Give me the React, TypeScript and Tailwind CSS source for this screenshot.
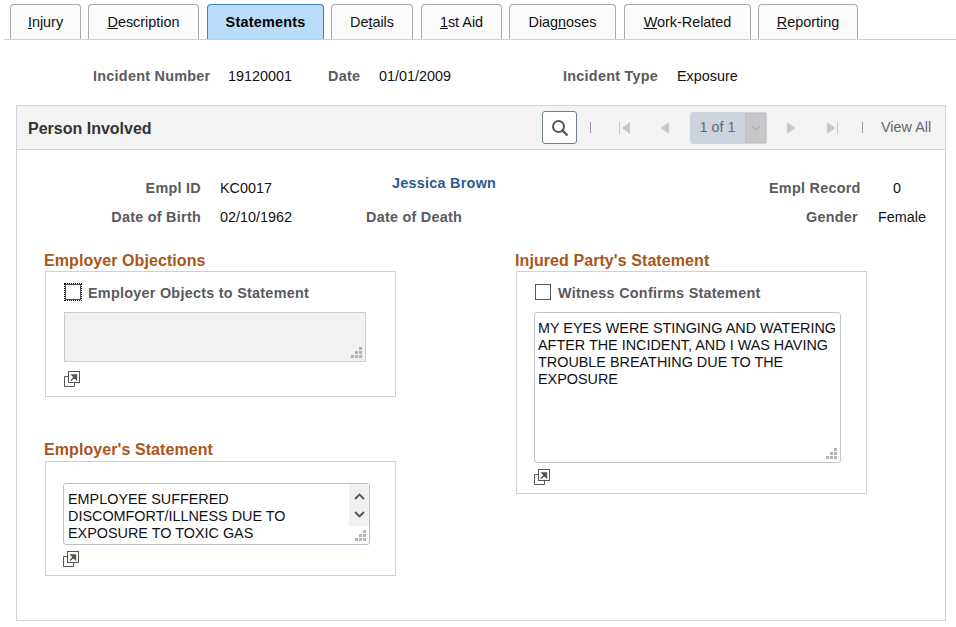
const tabs = [
  { pre: "", u: "I", post: "njury", cls: "ml-[10px] w-[71px]" },
  { pre: "", u: "D", post: "escription", cls: "ml-[7px] w-[111px]" },
  { pre: "Statements", u: "", post: "", cls: "ml-[8px] w-[117px]", active: true },
  { pre: "De", u: "t", post: "ails", cls: "ml-[7px] w-[82px]" },
  { pre: "", u: "1", post: "st Aid", cls: "ml-[8px] w-[81px]" },
  { pre: "Diag", u: "n", post: "oses", cls: "ml-[7px] w-[107px]" },
  { pre: "", u: "W", post: "ork-Related", cls: "ml-[8px] w-[127px]" },
  { pre: "", u: "R", post: "eporting", cls: "ml-[7px] w-[100px]" },
];

function Grip() {
  return (
    <svg width="12" height="12" viewBox="0 0 12 12" className="absolute right-[2px] bottom-[2px]" fill="#b4b4b4">
      <rect x="8" y="0" width="3" height="3" />
      <rect x="4" y="4" width="3" height="3" />
      <rect x="8" y="4" width="3" height="3" />
      <rect x="0" y="8" width="3" height="3" />
      <rect x="4" y="8" width="3" height="3" />
      <rect x="8" y="8" width="3" height="3" />
    </svg>
  );
}

function Expand({ cls }: { cls: string }) {
  return (
    <svg width="16" height="16" viewBox="0 0 16 16" className={cls} fill="none">
      <path d="M4.5 5.5H0.5V15.5H10.5V11.5" stroke="#555" />
      <rect x="4.5" y="0.5" width="11" height="11" fill="#fff" stroke="#555" />
      <path d="M7 9.5L11 5.5M8 4H12.5V8.5Z" stroke="#555" strokeWidth="1.4" fill="#555" />
    </svg>
  );
}

function Pipe({ color, cls }: { color: string; cls: string }) {
  return <span className={`w-px h-[11px] ${color} ${cls}`} />;
}

const label = "font-bold text-[#5a5a60] tracking-[0.26px]";
const heading = "text-[16px] font-bold text-[#a9561a] leading-[18px] tracking-[0.08px]";

export default function App() {
  return (
    <div className="w-[956px] h-[627px] bg-white overflow-hidden text-[14.4px] text-[#111] font-['Liberation_Sans',Arial,sans-serif]">
      <div className="pt-[4px] ml-[4px] flex border-b border-[#cfcfcf] h-[40px]">
        <div className="flex -ml-[4px]">
          {tabs.map((t) => (
            <div
              key={t.pre + t.u}
              className={`${t.cls} h-[35px] rounded-t-[4px] border border-b-0 flex items-center justify-center pt-[1px] ${
                t.active
                  ? "bg-[#b9dcfb] border-[#3f7fc0] font-bold text-black tracking-[0.22px]"
                  : "bg-[#fbfbfb] border-[#a9a9a9]"
              }`}
            >
              <span>
                {t.pre}
                {t.u && <span className="underline">{t.u}</span>}
                {t.post}
              </span>
            </div>
          ))}
        </div>
      </div>

      <div className="h-[65px] flex items-center pt-[9px]">
        <span className={`ml-[93px] w-[117px] whitespace-nowrap ${label}`}>Incident Number</span>
        <span className="ml-[18px] w-[64px]">19120001</span>
        <span className={`ml-[36px] w-[33px] ${label}`}>Date</span>
        <span className="ml-[18px] w-[72px]">01/01/2009</span>
        <span className={`ml-[112px] w-[95px] whitespace-nowrap ${label}`}>Incident Type</span>
        <span className="ml-[19px]">Exposure</span>
      </div>

      <div className="ml-[16px] w-[930px] h-[516px] border border-[#d0d3d9]">
        <div className="h-[44px] bg-[#f3f3f3] border-b border-[#d0d3d9] flex items-center">
          <span className="ml-[11px] w-[514px] pt-[2px] text-[16px] font-bold text-[#333]">Person Involved</span>
          <div className="w-[35px] h-[33px] bg-white border border-[#6f8183] rounded-[3px] flex items-center justify-center">
            <svg width="18" height="18" viewBox="0 0 18 18" fill="none" stroke="#555" strokeWidth="2">
              <circle cx="7.5" cy="7.5" r="5.5" />
              <path d="M11.5 11.5L16.5 16.5" strokeWidth="2.4" />
            </svg>
          </div>
          <Pipe color="bg-[#a98cb5]" cls="ml-[13px]" />
          <svg width="11" height="12" viewBox="0 0 11 12" fill="#c4c6c9" className="ml-[28px]">
            <rect x="0" y="0" width="1" height="12" />
            <path d="M11 0V12L3 6Z" />
          </svg>
          <svg width="8" height="12" viewBox="0 0 8 12" fill="#c4c6c9" className="ml-[31px]">
            <path d="M8 0V12L0 6Z" />
          </svg>
          <div className="ml-[21px] w-[77px] h-[32px] rounded-[3px] bg-[#cdd3dc] flex">
            <span className="w-[55px] flex items-center justify-center text-[#66667a]">1 of 1</span>
            <span className="w-[21px] h-[30px] mt-px bg-[#c7c7c7] border border-[#c0c0c0] flex items-center justify-center">
              <svg width="10" height="6" viewBox="0 0 10 6" fill="none" stroke="#a6a6a6">
                <path d="M1 1L5 5L9 1" />
              </svg>
            </span>
          </div>
          <svg width="8" height="12" viewBox="0 0 8 12" fill="#c4c6c9" className="ml-[20px]">
            <path d="M0 0V12L8 6Z" />
          </svg>
          <svg width="11" height="12" viewBox="0 0 11 12" fill="#c4c6c9" className="ml-[32px]">
            <path d="M0 0V12L8 6Z" />
            <rect x="10" y="0" width="1" height="12" />
          </svg>
          <Pipe color="bg-[#8fae86]" cls="ml-[24px]" />
          <span className="ml-[18px] text-[#66666e]">View All</span>
        </div>

        <div className="pt-[24px]">
          <div className="flex h-[29px] items-center">
            <span className={`w-[184px] text-right ${label}`}>Empl ID</span>
            <span className="ml-[19px] w-[172px]">KC0017</span>
            <span className="w-[377px] -translate-y-[5px] font-bold text-[#2e5a8e] tracking-[0.26px]">Jessica Brown</span>
            <span className={`w-[91px] whitespace-nowrap ${label}`}>Empl Record</span>
            <span className="ml-[33px]">0</span>
          </div>
          <div className="flex h-[29px] items-center">
            <span className={`w-[184px] text-right ${label}`}>Date of Birth</span>
            <span className="ml-[19px] w-[146px]">02/10/1962</span>
            <span className={`w-[440px] ${label}`}>Date of Death</span>
            <span className={`w-[54px] ${label}`}>Gender</span>
            <span className="ml-[18px]">Female</span>
          </div>
        </div>

        <div className="flex pt-[20px]">
          <div className="ml-[27px] w-[352px]">
            <h2 className={`${heading} h-[19px]`}>Employer Objections</h2>
            <div className="ml-px w-[351px] h-[126px] border border-[#cdd1d7]">
              <div className="flex items-center pt-[10px] pl-[18px] h-[32px]">
                <span className="w-[18px] h-[18px] -translate-y-px border border-dotted border-black shrink-0">
                  <span className="block w-full h-full border border-[#555] bg-white" />
                </span>
                <span className={`ml-[6px] translate-y-px ${label}`}>Employer Objects to Statement</span>
              </div>
              <div className="relative ml-[18px] mt-[8px] w-[302px] h-[50px] bg-[#f1f1f1] border border-[#c9ced4]">
                <Grip />
              </div>
              <Expand cls="ml-[18px] mt-[9px]" />
            </div>

            <h2 className={`${heading} mt-[44px] h-[20px]`}>Employer&apos;s Statement</h2>
            <div className="ml-px w-[351px] h-[115px] border border-[#cdd1d7]">
              <div className="relative ml-[17px] mt-[21px] w-[307px] h-[62px] bg-white border border-[#b9c0cb] rounded-[3px] pl-[4px] pt-[7px] leading-[17px]">
                EMPLOYEE SUFFERED
                <br />
                DISCOMFORT/ILLNESS DUE TO
                <br />
                EXPOSURE TO TOXIC GAS
                <div className="absolute top-0 right-0 w-[20px] h-[42px] bg-[#f0f0f0] flex flex-col items-center justify-around py-[3px]">
                  <svg width="11" height="7" viewBox="0 0 11 7" fill="none" stroke="#555" strokeWidth="1.8">
                    <path d="M1 6L5.5 1.5L10 6" />
                  </svg>
                  <svg width="11" height="7" viewBox="0 0 11 7" fill="none" stroke="#555" strokeWidth="1.8">
                    <path d="M1 1L5.5 5.5L10 1" />
                  </svg>
                </div>
                <Grip />
              </div>
              <Expand cls="ml-[17px] mt-[6px]" />
            </div>
          </div>

          <div className="ml-[120px] w-[352px]">
            <h2 className={`${heading} -ml-px h-[19px]`}>Injured Party&apos;s Statement</h2>
            <div className="w-[351px] h-[223px] border border-[#cdd1d7]">
              <div className="flex items-center pt-[10px] pl-[18px] h-[32px]">
                <span className="w-[16px] h-[16px] -translate-y-px border border-[#555] bg-white shrink-0" />
                <span className={`ml-[7px] translate-y-px ${label}`}>Witness Confirms Statement</span>
              </div>
              <div className="relative ml-[17px] mt-[8px] w-[307px] h-[151px] bg-white border border-[#c0c5cd] rounded-[3px] pl-[3px] pt-[7px] leading-[17px]">
                MY EYES WERE STINGING AND WATERING
                <br />
                AFTER THE INCIDENT, AND I WAS HAVING
                <br />
                TROUBLE BREATHING DUE TO THE
                <br />
                EXPOSURE
                <Grip />
              </div>
              <Expand cls="ml-[17px] mt-[6px]" />
            </div>
          </div>
        </div>
      </div>
    </div>
  );
}
